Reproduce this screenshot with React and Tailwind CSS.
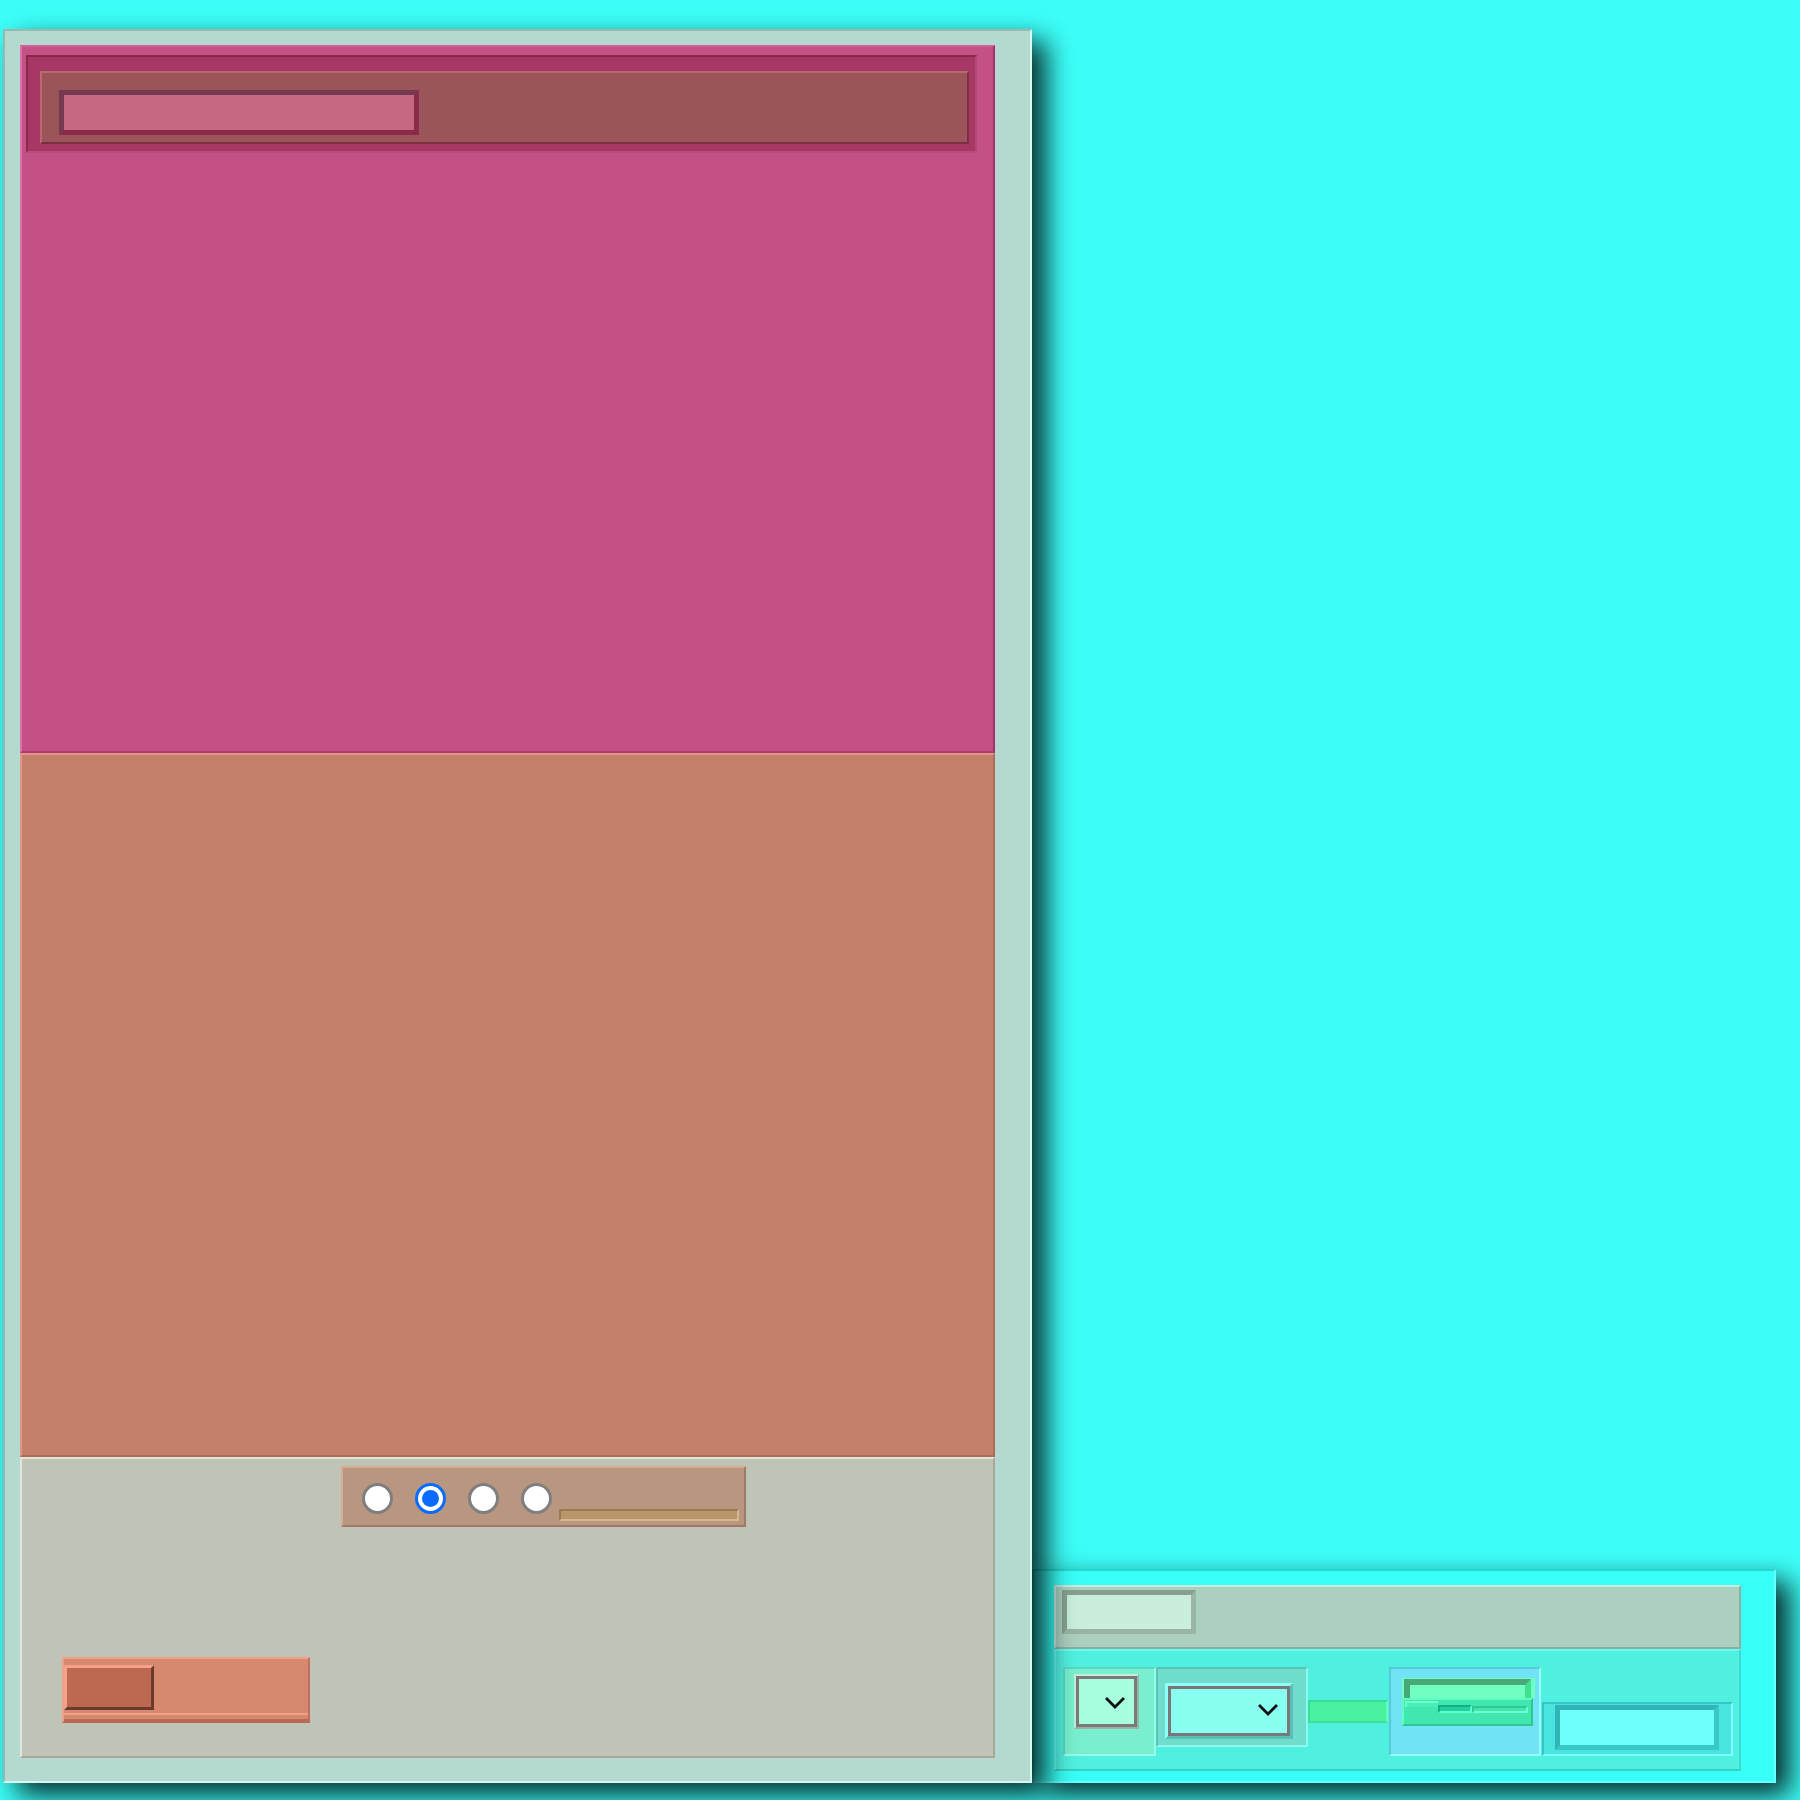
import React from "react";

function Chevron() {
  return (
    <svg width="22" height="13" viewBox="0 0 22 13" className="block">
      <polyline points="2,2 11,11 20,2" fill="none" stroke="#111" strokeWidth="2.8" />
    </svg>
  );
}

function Radio({ checked }) {
  if (checked) {
    return (
      <div className="w-[31px] h-[31px] rounded-full border-[3px] border-[#0a6cff] bg-white flex items-center justify-center shrink-0">
        <div className="w-[17px] h-[17px] rounded-full bg-[#0a6cff]" />
      </div>
    );
  }
  return <div className="w-[31px] h-[31px] rounded-full border-[3px] border-[#7f7f7f] bg-white shrink-0" />;
}

export default function App() {
  return (
    <div className="h-[1800px] w-[1800px] overflow-hidden bg-[#3dfff9] flex items-end pl-[3px] pb-[17px]">
      {/* Left window */}
      <div className="relative z-10 w-[1029px] h-[1754px] bg-[#b4d9d0] border-2 border-t-[#9ab8ae] border-l-[#9ab8ae] border-r-[#d8f8ee] border-b-[#d8f8ee] pl-[15px] pt-[14px] shadow-[14px_12px_26px_rgba(0,20,20,0.9)] shrink-0">
        {/* Pink panel */}
        <div className="w-[975px] h-[708px] bg-[#c45186] border-2 border-t-[#d85e96] border-l-[#e070a8] border-r-[#a83068] border-b-[#b03a6a] pl-[4px] pt-[8px]">
          <div className="w-[951px] h-[98px] bg-[#a73865] border-2 border-t-[#8a2848] border-l-[#8a2848] border-r-[#b04878] border-b-[#b84c7c] pl-[12px] pt-[14px]">
            <div className="w-[929px] h-[73px] bg-[#9b5459] border-2 border-t-[#b86a6e] border-l-[#b86a6e] border-r-[#7a3040] border-b-[#7a3040] pl-[17px] pt-[17px]">
              <div className="w-[360px] h-[45px] bg-[#c66882] border-[5px] border-t-[#753a52] border-l-[#753a52] border-r-[#8c2a4a] border-b-[#8c2a4a]" />
            </div>
          </div>
        </div>
        {/* Salmon panel */}
        <div className="w-[975px] h-[704px] bg-[#c5806c] border-2 border-t-[#e0958a] border-l-[#e0958a] border-r-[#b06a58] border-b-[#b06a58]" />
        {/* Gray panel */}
        <div className="w-[975px] h-[301px] bg-[#c0c4b6] border-2 border-t-[#e0e6da] border-l-[#e0e6da] border-r-[#a8a898] border-b-[#a8a898] flex flex-col">
          <div className="ml-[319px] mt-[7px] w-[405px] h-[61px] bg-[#b99680] border-2 border-t-[#d4ac96] border-l-[#d4ac96] border-r-[#a07a64] border-b-[#a07a64] flex items-start pl-[19px] pt-[15px]">
            <div className="flex gap-[22px]">
              <Radio />
              <Radio checked />
              <Radio />
              <Radio />
            </div>
            <div className="ml-[7px] mt-[26px] w-[180px] h-[12px] bg-[#b6966a] border-2 border-t-[#9a7a4e] border-l-[#9a7a4e] border-r-[#d8b888] border-b-[#d8b888]" />
          </div>
          <div className="ml-[40px] mt-[130px] w-[248px] h-[66px] bg-[#d6896f] border-2 border-t-[#eea088] border-l-[#eea088] border-r-[#c07060] border-b-[#b86a55] flex flex-col">
            <div className="mt-[6px] w-[90px] h-[45px] bg-[#bd6850] border-[3px] border-t-[#f5a088] border-l-[#f5a088] border-r-[#6a3a2e] border-b-[#6a3a2e]" />
            <div className="mt-[3px] w-full h-[8px] bg-[#d6896f] border-t-2 border-b-2 border-t-[#f0a088] border-b-[#b86a55]" />
          </div>
        </div>
      </div>

      {/* Right window */}
      <div className="relative w-[744px] h-[214px] bg-[#38fff8] border-2 border-t-[#22d8d0] border-l-[#22d8d0] border-r-[#68ffff] border-b-[#68ffff] pl-[20px] pt-[14px] shadow-[14px_12px_26px_rgba(0,20,20,0.9)] shrink-0">
        {/* settings bar */}
        <div className="w-[687px] h-[64px] bg-[#abd0bf] border-2 border-t-[#c8ece0] border-l-[#c8ece0] border-r-[#90aca0] border-b-[#90aca0] pl-[6px] pt-[3px]">
          <div className="w-[134px] h-[44px] bg-[#c9eedc] border-[5px] border-t-[#87a090] border-l-[#87a090] border-r-[#9ab4a6] border-b-[#9ab4a6]" />
        </div>
        {/* lower panel */}
        <div className="w-[687px] h-[122px] bg-[#50f0e0] border-2 border-t-[#64fff0] border-l-[#64fff0] border-r-[#40d8c8] border-b-[#38d0c0] flex items-start pl-[7px] pt-[16px]">
          {/* Box A */}
          <div className="w-[93px] h-[89px] bg-[#78f0d0] border-2 border-t-[#58d8c0] border-l-[#58d8c0] border-r-[#98ffe8] border-b-[#98ffe8] pl-[9px] pt-[5px] shrink-0">
            <div className="w-[65px] h-[55px] border-2 border-t-[#c8ecd8] border-l-[#c8ecd8] border-r-[#98b4a6] border-b-[#98b4a6]">
              <div className="w-full h-full bg-[#a8ffe0] border-[3px] border-[#7a7a7a] flex items-start justify-end pr-[8px] pt-[17px]">
                <Chevron />
              </div>
            </div>
          </div>
          {/* Box B */}
          <div className="w-[152px] h-[80px] bg-[#70dccc] border-2 border-t-[#58c4b8] border-l-[#58c4b8] border-r-[#90f8f0] border-b-[#90f8f0] pl-[7px] pt-[14px] shrink-0">
            <div className="w-[128px] h-[56px] border-[3px] border-t-[#90fff8] border-l-[#90fff8] border-r-[#58c0b8] border-b-[#58c0b8]">
              <div className="w-full h-full bg-[#88fff0] border-[3px] border-[#787878] flex items-start justify-end pr-[8px] pt-[14px]">
                <Chevron />
              </div>
            </div>
          </div>
          {/* green bar */}
          <div className="mt-[33px] w-[80px] h-[23px] bg-[#48f0a0] border-2 border-t-[#34e094] border-l-[#34e094] border-r-[#60ffb8] border-b-[#40e098] shrink-0" />
          {/* Box C */}
          <div className="ml-[1px] w-[152px] h-[89px] bg-[#70e4f4] border-2 border-t-[#58c8d8] border-l-[#58c8d8] border-r-[#98ffff] border-b-[#98ffff] pl-[11px] pt-[9px] shrink-0">
            <div className="w-[133px] h-[20px] bg-[#70ffc0] pt-[1px] pl-[2px] pr-[4px]">
              <div className="w-full h-full bg-[#70ffc0] border-t-[6px] border-l-[6px] border-r-[6px] border-t-[#48a878] border-l-[#48a878] border-r-[#40e090]" />
            </div>
            <div className="w-[131px] h-[28px] bg-[#40e8b0] border-2 border-t-[#60ffc4] border-l-[#60ffc4] border-r-[#30c890] border-b-[#30c890] flex items-start pt-[1px] pl-[1px]">
              <div className="w-[33px] h-[6px] bg-[#48f0b8] border-t-2 border-l-2 border-t-[#70ffd0] border-l-[#70ffd0]" />
              <div className="mt-[4px] w-[34px] h-[8px] bg-[#20d0a0] border-2 border-t-[#10b088] border-l-[#10b088] border-r-[#60ffc8] border-b-[#60ffc8]" />
              <div className="mt-[5px] w-[56px] h-[7px] bg-[#40e8b0] border-2 border-t-[#30c890] border-l-[#30c890] border-r-[#70ffd0] border-b-[#70ffd0]" />
            </div>
          </div>
          {/* Box D */}
          <div className="ml-[1px] mt-[35px] w-[191px] h-[54px] bg-[#48e4e0] border-2 border-t-[#38c4c4] border-l-[#38c4c4] border-r-[#80ffff] border-b-[#80ffff] pl-[11px] pt-[1px] shrink-0">
            <div className="w-[164px] h-[45px] bg-[#6effff] border-[5px] border-t-[#30b4b4] border-l-[#30b4b4] border-r-[#38c8c8] border-b-[#38c8c8]" />
          </div>
        </div>
      </div>
    </div>
  );
}
